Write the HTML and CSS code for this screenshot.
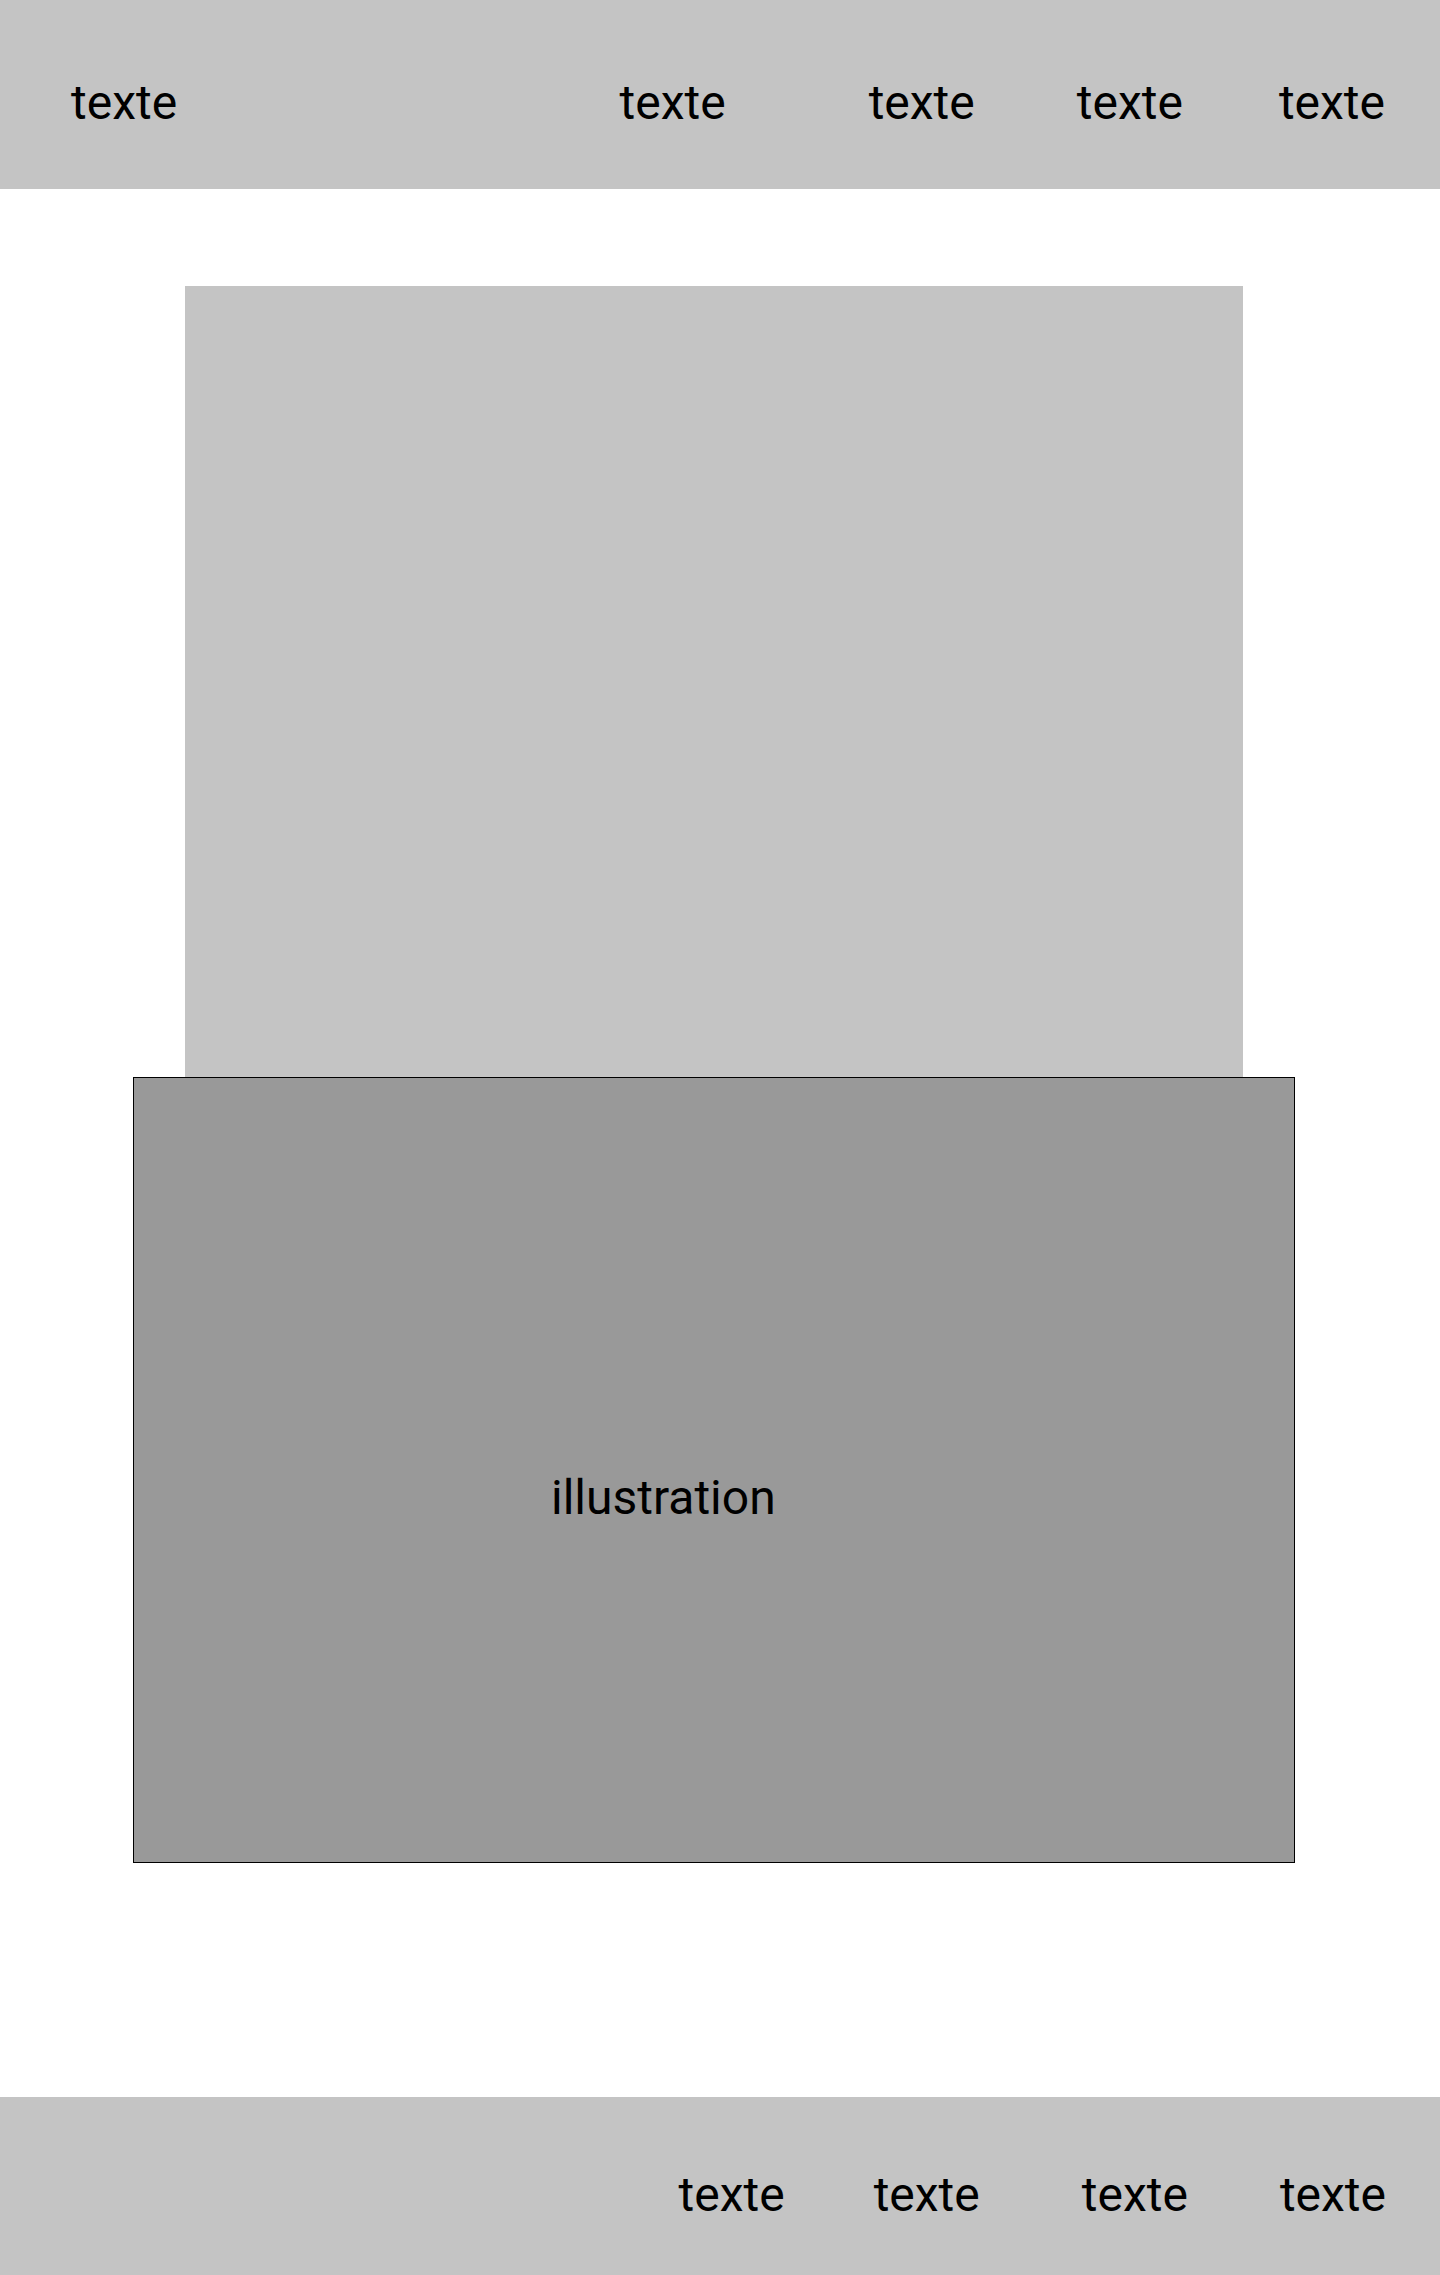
FILE: index.html
```html
<!DOCTYPE html>
<html lang="fr">
<head>
    <meta charset="UTF-8">
    <meta name="viewport" content="width=device-width, initial-scale=1.0">
    <title>Maquette</title>
    <link rel="stylesheet" href="styles.css">
</head>

<body>

<header class="site-header">
    <span class="logo">texte</span>
    <nav class="main-nav">
        <a href="#" class="nav-link nav-one">texte</a>
        <a href="#" class="nav-link nav-two">texte</a>
        <a href="#" class="nav-link nav-three">texte</a>
        <a href="#" class="nav-link nav-four">texte</a>
    </nav>
</header>

<main class="content">
    <!-- Hero block -->
    <div class="hero"></div>

    <!-- Illustration -->
    <div class="illustration">
        <span class="illustration-label">illustration</span>
    </div>
</main>

<footer class="site-footer">
    <nav class="footer-nav">
        <a href="#" class="footer-link foot-one">texte</a>
        <a href="#" class="footer-link foot-two">texte</a>
        <a href="#" class="footer-link foot-three">texte</a>
        <a href="#" class="footer-link foot-four">texte</a>
    </nav>
</footer>

</body>
</html>
```

FILE: styles.css
```css
body {
    font-family: Roboto, "Liberation Sans", Arial, sans-serif;
    margin: 0;
    padding: 0;
    background-color: #fff;
    color: #000;
}

a {
    color: #000;
    text-decoration: none;
}

.site-header {
    height: 189px;
    box-sizing: border-box;
    background-color: #c4c4c4;
    padding: 75px 55px 0 71px;
    display: flex;
    justify-content: space-between;
    align-items: flex-start;
    font-size: 48px;
    line-height: 56px;
}

.main-nav {
    display: flex;
}

.nav-two {
    margin-left: 143px;
}

.nav-three {
    margin-left: 102px;
}

.nav-four {
    margin-left: 96px;
}

.content {
    padding: 97px 0 234px;
    display: flex;
    flex-direction: column;
    align-items: flex-start;
}

.hero {
    width: 1058px;
    height: 791px;
    margin-left: 185px;
    background-color: #c4c4c4;
}

.illustration {
    position: relative;
    width: 1162px;
    height: 786px;
    box-sizing: border-box;
    margin-left: 133px;
    background-color: #999;
    border: 1px solid #000;
}

.illustration-label {
    position: absolute;
    left: 417px;
    top: 392px;
    font-size: 48px;
    line-height: 56px;
}

.site-footer {
    height: 178px;
    box-sizing: border-box;
    background-color: #c4c4c4;
    padding: 70px 54px 0 0;
    display: flex;
    justify-content: flex-end;
    font-size: 48px;
    line-height: 56px;
}

.footer-nav {
    display: flex;
}

.foot-two {
    margin-left: 89px;
}

.foot-three {
    margin-left: 102px;
}

.foot-four {
    margin-left: 92px;
}
```
